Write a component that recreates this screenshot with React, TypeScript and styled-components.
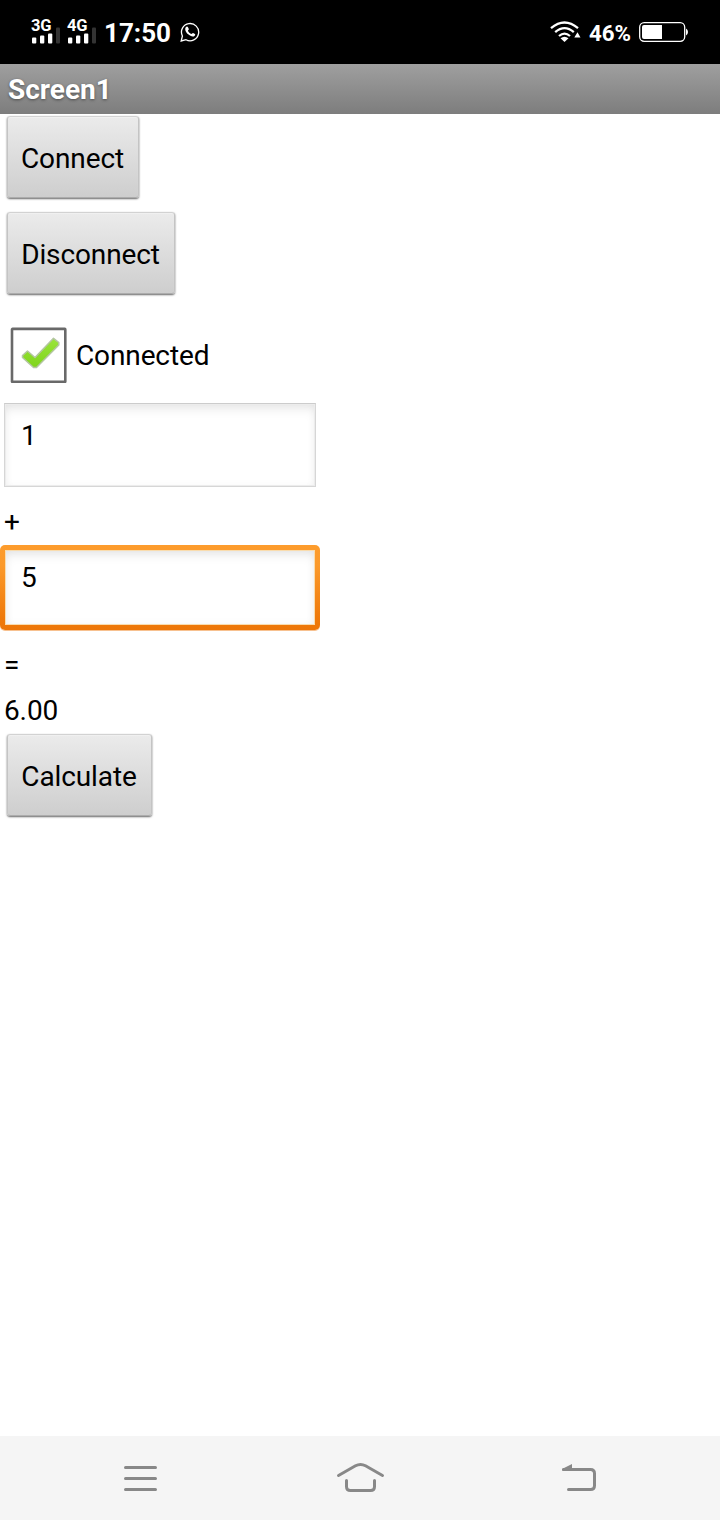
import React from 'react';
import styled, { createGlobalStyle } from 'styled-components';

const GlobalStyle = createGlobalStyle`
  * { box-sizing: border-box; }
  body { margin: 0; background: #fff; font-family: Roboto, "Liberation Sans", sans-serif; }
`;

const Screen = styled.div`
  display: flex;
  flex-direction: column;
  width: 720px;
  height: 1520px;
  overflow: hidden;
  background: #fff;
  color: #000;
`;

const StatusBar = styled.header`
  display: flex;
  flex: none;
  justify-content: space-between;
  height: 64px;
  padding: 0 32px 0 31px;
  background: #000;
  color: #fff;
  font-weight: 700;
`;

const StatusGroup = styled.div`
  display: flex;
  align-items: center;
`;

const Signal = styled.div`
  width: 29px;
  height: 28px;
  margin: 0 7px 2px 0;
  svg { display: block; overflow: visible; }
`;

const SignalLabel = styled.div`
  height: 15px;
  font-size: 16.5px;
  line-height: 17px;
  letter-spacing: -0.1px;
`;

const Clock = styled.span`
  margin: 2px 9px 0 1px;
  font-size: 26px;
  line-height: 30px;
`;

const Percent = styled.span`
  margin: 2px 8px 0 8px;
  font-size: 22.3px;
  line-height: 26px;
`;

const TitleBar = styled.div`
  flex: none;
  height: 50px;
  padding-left: 8px;
  background: linear-gradient(#9f9f9f, #7d7d7d);
  color: #fff;
  font-size: 28px;
  font-weight: 700;
  line-height: 52px;
  text-shadow: 0 1px 3px rgba(0, 0, 0, 0.45);
`;

const Content = styled.main`
  display: flex;
  flex: 1;
  flex-direction: column;
  align-items: flex-start;
  padding-top: 2px;
  font-size: 28px;
  letter-spacing: -0.12px;
`;

const Button = styled.button<{ $width: number }>`
  width: ${(p) => p.$width}px;
  height: 82px;
  margin: 0 0 14px 7px;
  padding: 3px 1px 0 0;
  border: 1px solid;
  border-color: #d2d2d2 #c4c4c4 #acacac;
  border-radius: 3px;
  background: linear-gradient(#ebebeb, #cecece);
  box-shadow: 0 1px 2px rgba(0, 0, 0, 0.6), inset 0 1px 1px rgba(255, 255, 255, 0.3);
  color: #000;
  font: 400 28px/34px Roboto, "Liberation Sans", sans-serif;
  letter-spacing: -0.12px;
  white-space: nowrap;
`;

const CheckRow = styled.label`
  display: flex;
  align-items: center;
  height: 56px;
  margin: 19px 0 20px 10px;
`;

const CheckBox = styled.span`
  width: 57px;
  height: 56px;
  margin-right: 9px;
  svg { display: block; }
`;

const TextField = styled.div`
  width: 312px;
  height: 84px;
  margin-left: 4px;
  padding: 15px 16px;
  border: 1px solid #d6d6d6;
  border-top-color: #cccccc;
  background: #fff;
  box-shadow: inset 0 0 0 1px #ececec, inset 0 7px 12px -3px rgba(0, 0, 0, 0.1), inset 0 0 8px rgba(0, 0, 0, 0.04);
  line-height: 34px;
`;

const FocusRing = styled.div`
  width: 320px;
  height: 85px;
  padding: 5px;
  border-radius: 5px;
  background: linear-gradient(#fd9c2c, #fb992a 25%, #ef7a0b 85%, #ed7608);
  box-shadow: 0 1px 0 rgba(237, 118, 8, 0.45);
`;

const FocusedField = styled(TextField)`
  width: 310px;
  height: 75px;
  margin: 0;
  padding: 10px 15px;
  border: 1px solid #f9dcae;
  box-shadow: inset 0 6px 12px -3px rgba(0, 0, 0, 0.1), inset 0 0 8px rgba(0, 0, 0, 0.04);
`;

const Label = styled.div<{ $height: number; $line: number }>`
  height: ${(p) => p.$height}px;
  padding-left: 4px;
  line-height: ${(p) => p.$line}px;
`;

const NavBar = styled.nav`
  display: flex;
  flex: none;
  justify-content: space-between;
  height: 84px;
  padding: 0 100px;
  background: #f5f5f5;
`;

const NavItem = styled.div`
  width: 80px;
  height: 84px;
  svg { display: block; }
`;

function SignalStrength({ label }: { label: string }) {
  return (
    <Signal>
      <SignalLabel>{label}</SignalLabel>
      <svg width="29" height="13" viewBox="0 0 29 13">
        <rect x="1" y="5.500" width="4.300" height="6" rx="1" fill="#fff" />
        <rect x="9" y="3.500" width="4.300" height="8" rx="1" fill="#fff" />
        <rect x="17" y="1.500" width="4.300" height="10" rx="1" fill="#fff" />
        <rect x="25" y="-4.500" width="4" height="16" rx="1" fill="#333" />
      </svg>
    </Signal>
  );
}

export default function App() {
  return (
    <>
      <GlobalStyle />
      <Screen>
        <StatusBar>
          <StatusGroup>
            <SignalStrength label="3G" />
            <SignalStrength label="4G" />
            <Clock>17:50</Clock>
            <svg width="20" height="20" viewBox="0 0 20 20">
              <path d="M1.2 19l1.2-5A8.6 8.6 0 1 1 6 17.7z" fill="none" stroke="#fff" strokeWidth="1.3" />
              <path d="M5.6 5.4c1.2-1.5 2-1 2.4-.1l.8 1.8c.2.6-.7 1.2-.9 1.6.6 1.5 2 2.8 3.5 3.4.6-.3 1.1-1.3 1.7-1.1l1.8.9c.7.4.2 1.5-.5 2.1-1.6 1.5-4.4-.1-6.2-1.7C6.2 10.6 4.5 7.6 5.6 5.4z" fill="#fff" />
            </svg>
          </StatusGroup>
          <StatusGroup>
            <svg width="31" height="22" viewBox="0 0 31 22">
              <g fill="none" stroke="#fff" strokeWidth="2.3">
                <path d="M1 7.2Q14.500-4.200 28 7.2" />
                <path d="M5.2 11.2Q14.500 3 23.8 11.2" />
                <path d="M9 15Q14.500 10.200 20 15" />
              </g>
              <path d="M10.500 17.200Q14.500 14.200 18.500 17.200L14.500 21z" fill="#fff" />
              <path d="M24.300 16.600L27.500 11.200L30.500 16.600z" fill="#fff" />
            </svg>
            <Percent>46%</Percent>
            <svg width="49" height="20" viewBox="0 0 49 20">
              <rect x="0.7" y="0.7" width="45" height="18.6" rx="4.5" fill="none" stroke="#fff" strokeWidth="1.3" />
              <rect x="3" y="3" width="18" height="14" rx="2" fill="#fff" />
              <rect x="18" y="3" width="5" height="14" fill="#fff" />
              <path d="M47 6.500Q49 7.500 49 10T47 13.500z" fill="#fff" />
            </svg>
          </StatusGroup>
        </StatusBar>
        <TitleBar>Screen1</TitleBar>
        <Content>
          <Button $width={132}>Connect</Button>
          <Button $width={168}>Disconnect</Button>
          <CheckRow>
            <CheckBox>
              <svg width="57" height="56" viewBox="0 0 57 56">
                <defs>
                  <linearGradient id="tick" x1="0" y1="0" x2="0" y2="1">
                    <stop offset="0" stopColor="#9be43c" />
                    <stop offset="1" stopColor="#7fd51b" />
                  </linearGradient>
                </defs>
                <rect x="2" y="1.900" width="53.300" height="53" rx="0.5" fill="#fff" stroke="#696969" strokeWidth="2.600" />
                <path d="M12.500 28.500L17.500 24L25 30.500L43.500 11.300L48.800 15.500V18L26.500 40.500H23.500L12.500 30.500z" fill="url(#tick)" stroke="#b4c6a2" strokeWidth="1.500" strokeLinejoin="round" />
              </svg>
            </CheckBox>
            Connected
          </CheckRow>
          <TextField>1</TextField>
          <Label $height={58} $line={70}>+</Label>
          <FocusRing>
            <FocusedField>5</FocusedField>
          </FocusRing>
          <Label $height={63} $line={70}>=</Label>
          <Label $height={41} $line={35}>6.00</Label>
          <Button $width={145}>Calculate</Button>
        </Content>
        <NavBar>
          <NavItem>
            <svg width="80" height="84" viewBox="0 0 80 84">
              <path d="M25.500 31.500H55.500M25.500 42.500H55.500M25.500 53.500H55.500" stroke="#888" strokeWidth="3" strokeLinecap="round" />
            </svg>
          </NavItem>
          <NavItem>
            <svg width="80" height="84" viewBox="0 0 80 84">
              <path d="M18.500 39.500L35.500 29.800Q40.500 27 45.500 29.800L62.500 39.500M26.500 44.500V50.500Q26.500 54.500 30.500 54.500H50.500Q54.500 54.500 54.500 50.500V44.500" fill="none" stroke="#888" strokeWidth="3" strokeLinecap="round" />
            </svg>
          </NavItem>
          <NavItem>
            <svg width="80" height="84" viewBox="0 0 80 84">
              <path d="M23.500 33.500H50.500Q54.500 33.500 54.500 37.500V49.500Q54.500 53.500 50.500 53.500H28.500" fill="none" stroke="#888" strokeWidth="3" strokeLinecap="round" />
              <path d="M22 33L32 28V34.500H22z" fill="#888" />
            </svg>
          </NavItem>
        </NavBar>
      </Screen>
    </>
  );
}
